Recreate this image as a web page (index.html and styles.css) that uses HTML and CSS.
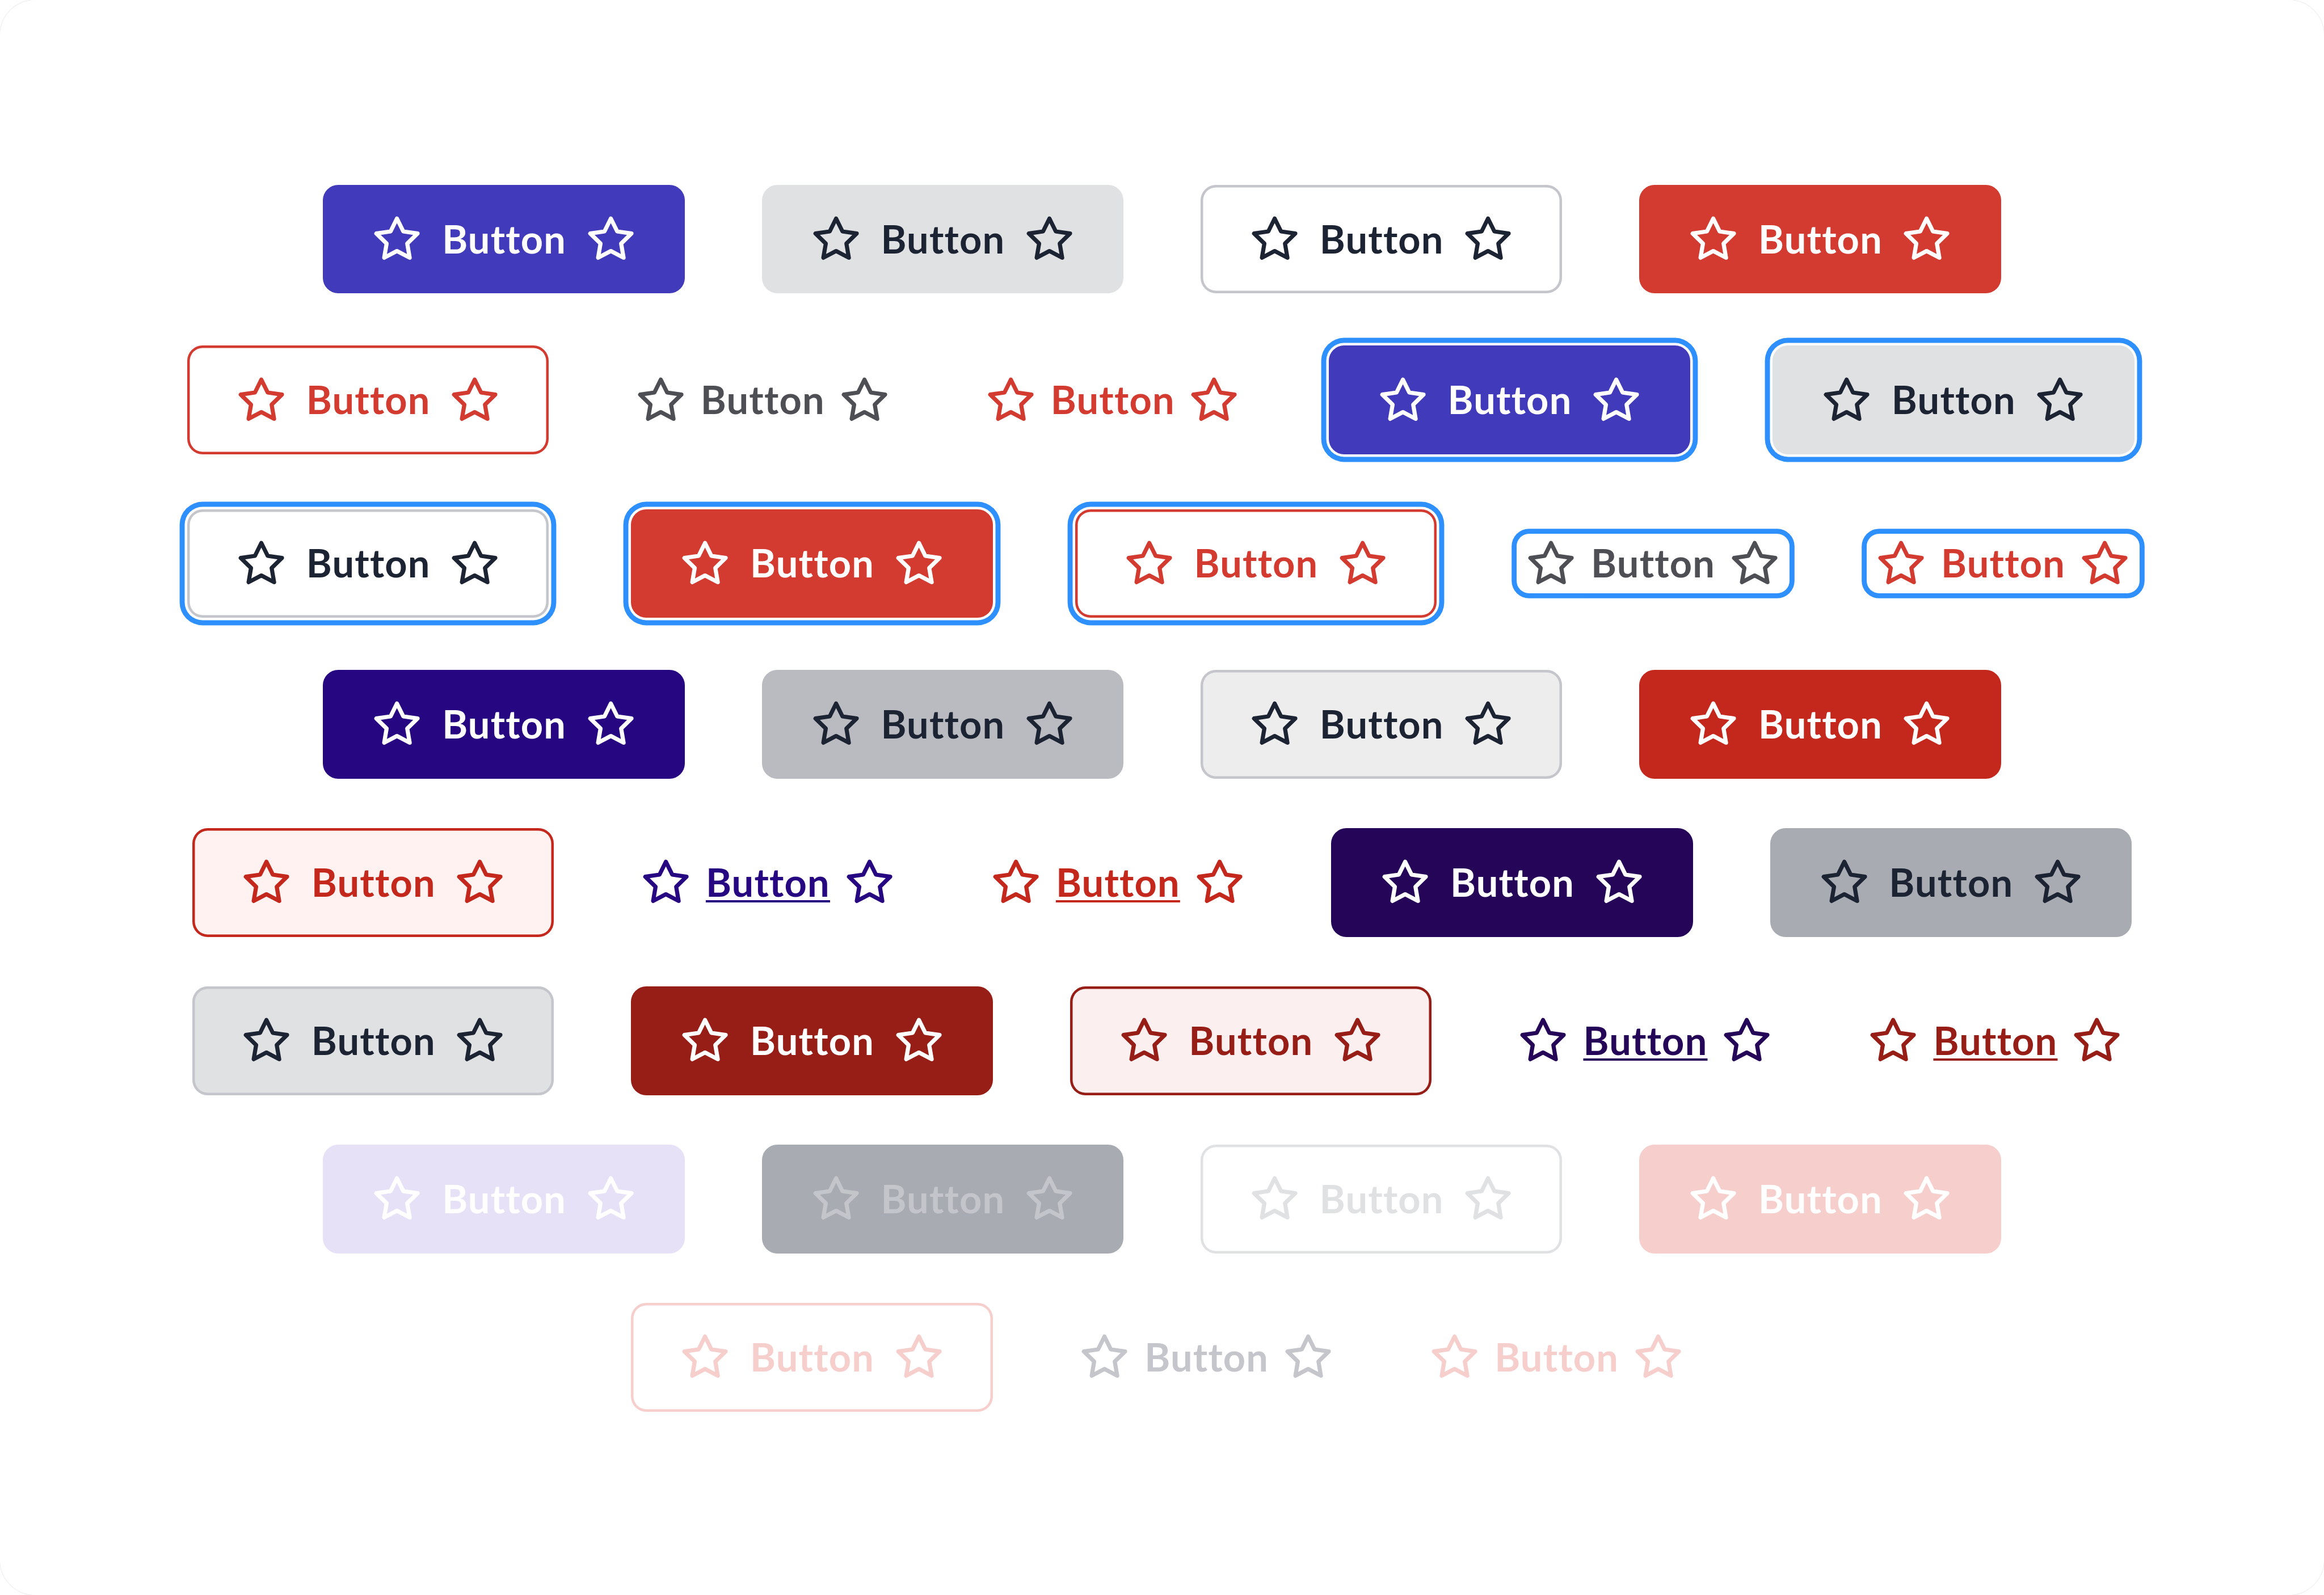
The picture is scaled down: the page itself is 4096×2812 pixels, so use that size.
FILE: index.html
```html
<!DOCTYPE html>
<html lang="en">
<head>
<meta charset="utf-8">
<title>Button states</title>
<link rel="stylesheet" href="styles.css">
<script src="buttons.js" defer></script>
</head>
<body>
<svg class="sprite" aria-hidden="true">
  <symbol id="star" viewBox="0 0 24 24">
    <polygon points="12 2 15.09 8.26 22 9.27 17 14.14 18.18 21.02 12 17.77 5.82 21.02 7 14.14 2 9.27 8.91 8.26 12 2" fill="none" stroke="currentColor" stroke-width="2" stroke-linecap="round" stroke-linejoin="round"/>
  </symbol>
</svg>
<main class="board" id="board"></main>
</body>
</html>
```
FILE: buttons.js
```js
// One entry per row; each string holds the variant and state classes of a button.
const rows = [
  ["primary", "secondary", "outline", "danger"],
  ["danger-outline", "link", "link danger-link", "primary focus", "secondary focus"],
  ["outline focus", "danger focus", "danger-outline focus", "link focus", "link danger-link focus"],
  ["primary hover", "secondary hover", "outline hover", "danger hover"],
  ["danger-outline hover", "link hover", "link danger-link hover", "primary active", "secondary active"],
  ["outline active", "danger active", "danger-outline active", "link active", "link danger-link active"],
  ["primary disabled", "secondary disabled", "outline disabled", "danger disabled"],
  ["danger-outline disabled", "link disabled", "link danger-link disabled"]
];
const star = '<svg class="icon"><use href="#star"/></svg>';
document.getElementById("board").innerHTML = rows.map(row =>
  `<div class="row">${row.map(kind =>
    `<button class="btn ${kind}">${star}<span class="label">Button</span>${star}</button>`
  ).join("")}</div>`
).join("");
```
FILE: styles.css
```css
* { box-sizing: border-box; }
body { margin: 0; background: #fff; }
.sprite { position: absolute; width: 0; height: 0; }
.board {
  width: 4096px; height: 2812px; padding-top: 325.8px;
  display: flex; flex-direction: column; gap: 87.35px;
  background: #fff; border-radius: 62px; box-shadow: 0 0 0 1px #ececec;
}
.row { display: flex; justify-content: center; align-items: center; gap: 135.9px; }
.btn {
  --edge: transparent;
  display: flex; align-items: center; justify-content: center; gap: 35.6px;
  width: 637.4px; height: 191.7px; padding: 0; border: 0; border-radius: 27px;
  box-shadow: inset 0 0 0 4.5px var(--edge);
  font: 700 68.5px/82px Lato, sans-serif; letter-spacing: 1.2px;
  font-variant-ligatures: none;
}
.icon { width: 87.2px; height: 87.2px; flex: none; }
.label { width: 217.9px; flex: none; text-align: center; white-space: nowrap; padding-bottom: 2px; }

.primary { background: #413abb; color: #fff; }
.primary.hover { background: #270682; }
.primary.active { background: #250558; }
.primary.disabled { background: #e6e1f7; color: #fff; }

.secondary { background: #dfe1e3; color: #1c2333; }
.secondary.hover { background: #b9bbc1; }
.secondary.active { background: #a8abb2; }
.secondary.disabled { background: #a8abb2; color: #c4c5ca; }

.outline { --edge: #c5c6cc; background: #fff; color: #1c2333; }
.outline.hover { background: #ededed; }
.outline.active { background: #dfe1e3; }
.outline.disabled { --edge: #e0e1e3; background: #fff; color: #e0e1e3; }

.danger { background: #d33b31; color: #fff; }
.danger.hover { background: #c4281c; }
.danger.active { background: #971e16; }
.danger.disabled { background: #f6cecb; color: #fff; }

.danger-outline { --edge: currentColor; background: #fff; color: #d33b31; }
.danger-outline.hover { background: #fff2f1; color: #c4281c; }
.danger-outline.active { background: #fcefef; color: #971e16; }
.danger-outline.disabled { color: #f6cecb; }

.link { width: 481.1px; height: 104.8px; gap: 26.8px; border-radius: 22px; background: none; box-shadow: none; color: #4d4f55; }
.link.hover { color: #270682; }
.link.active { color: #250558; }
.link.disabled { color: #c5c6cc; }
.danger-link { color: #d33b31; }
.danger-link.hover { color: #c4281c; }
.danger-link.active { color: #971e16; }
.danger-link.disabled { color: #f6cecb; }
.link.hover .label, .link.active .label {
  text-decoration: underline; text-decoration-thickness: 4px;
  text-underline-offset: 6px; text-decoration-skip-ink: none;
}

.focus { margin: 4.55px; box-shadow: inset 0 0 0 4.5px var(--edge), 0 0 0 4.5px #fff, 0 0 0 13.4px #2e90ff; }
.link.focus { margin: 0; box-shadow: 0 0 0 8.8px #2e90ff; }
```
